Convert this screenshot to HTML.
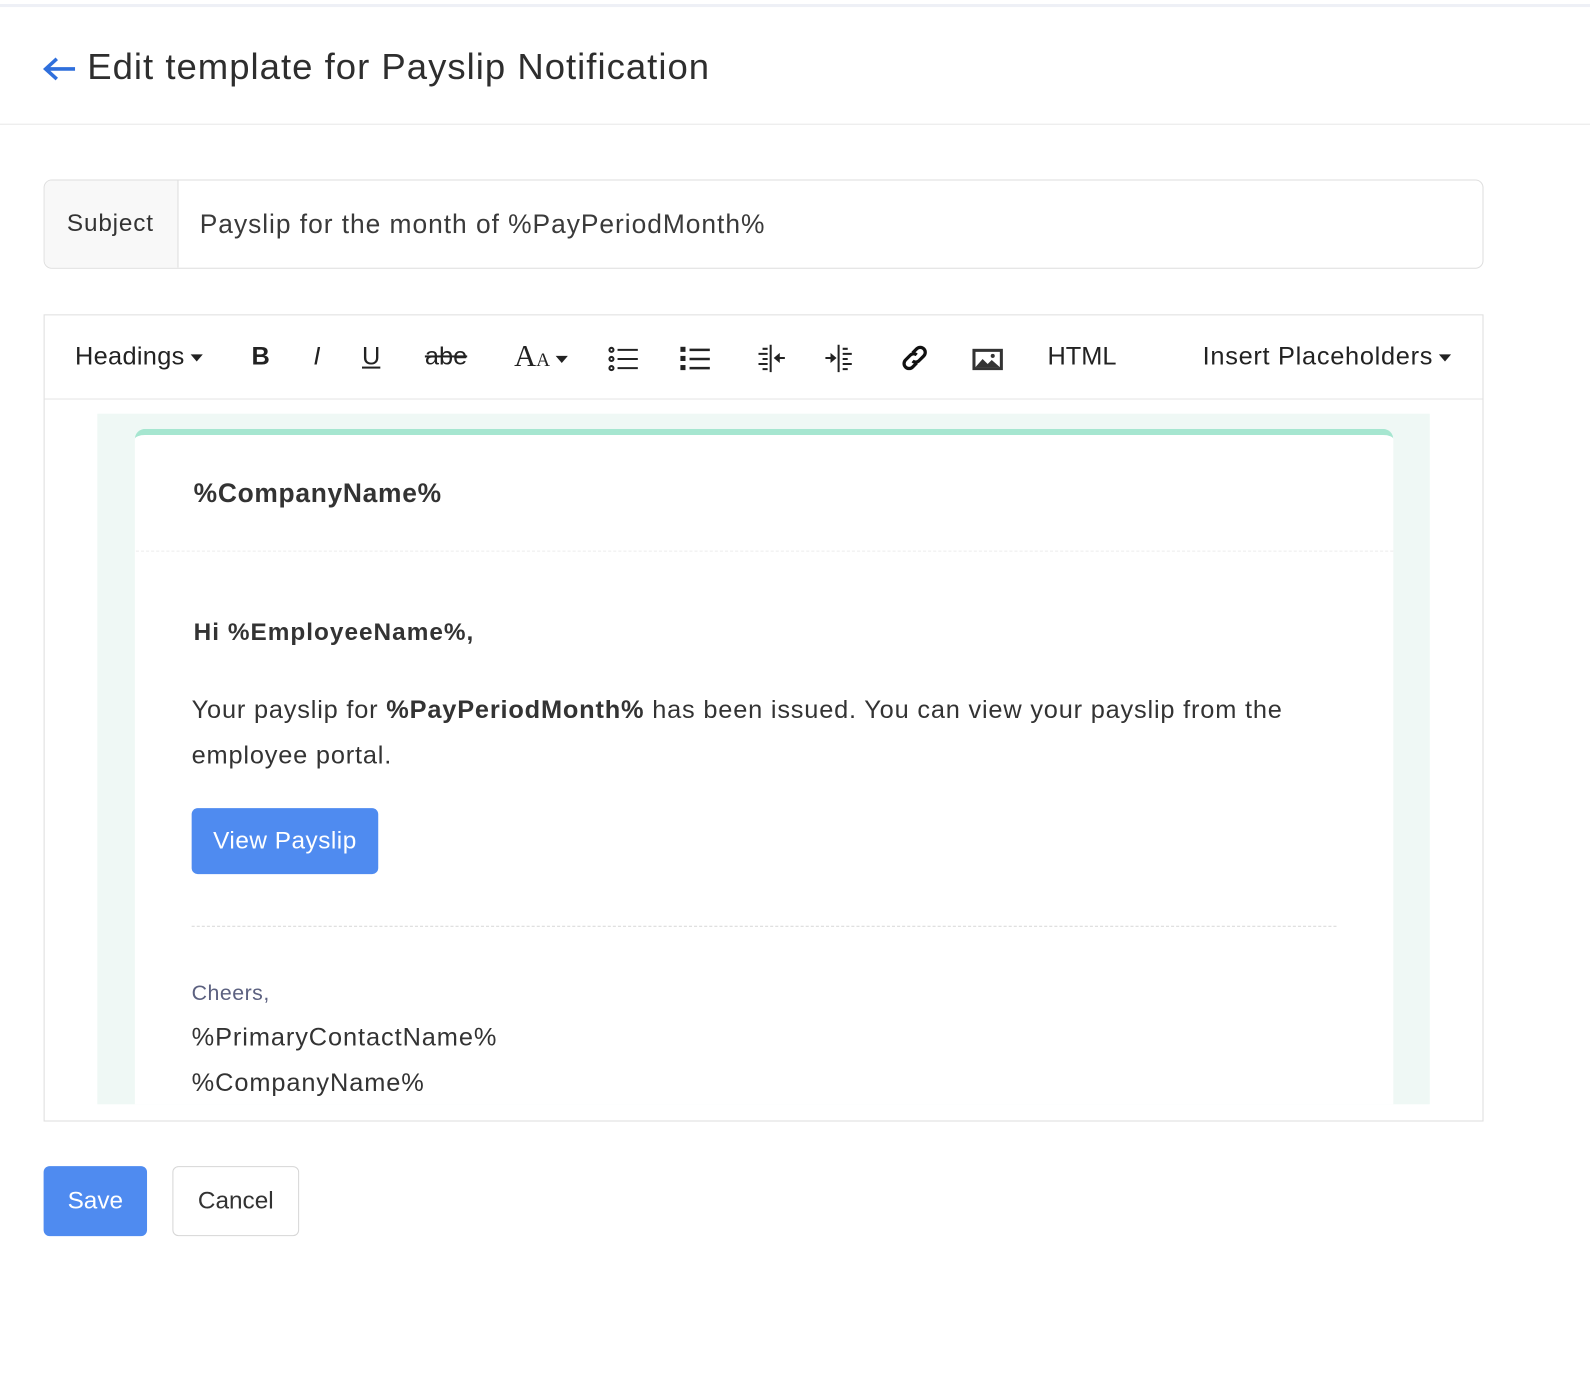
<!DOCTYPE html>
<html><head><meta charset="utf-8"><style>
html,body{margin:0;padding:0;background:#fff;width:1590px;height:1384px;overflow:hidden}
#w{position:absolute;left:0;top:0;width:1568px;height:1365px;transform:scale(1.01403);transform-origin:0 0;font-family:"Liberation Sans",sans-serif;color:#2b2b2b}
.a{position:absolute}
.tb{position:absolute;top:352px;transform:translateY(-50%);font-size:25px;color:#222;white-space:nowrap}
.car{display:inline-block;width:0;height:0;border-left:6px solid transparent;border-right:6px solid transparent;border-top:7px solid #222;vertical-align:middle;margin-left:6px}
</style></head><body><div id="w">
<div class="a" style="left:0;top:4px;width:1568px;height:3px;background:#eef0f6"></div>
<svg class="a" style="left:42px;top:55px" width="34" height="26" viewBox="0 0 34 26"><path d="M32 13H4M14 3L3 13l11 10" fill="none" stroke="#2f6fdc" stroke-width="3.5"/></svg>
<div class="a" style="left:86px;top:45px;font-size:36px;color:#2e2e2e;letter-spacing:1px">Edit template for Payslip Notification</div>
<div class="a" style="left:0;top:122px;width:1568px;height:1px;background:#e8e8e8"></div>

<div class="a" style="left:43px;top:177px;width:1418px;height:86px;border:1px solid #dedede;border-radius:8px;overflow:hidden">
 <div class="a" style="left:0;top:0;width:131px;height:86px;background:#f8f8f8;border-right:1px solid #dedede"></div>
 <div class="a" style="left:22px;top:29px;font-size:24px;color:#333;letter-spacing:0.8px">Subject</div>
 <div class="a" style="left:153px;top:28px;font-size:26px;color:#3a3a3a;letter-spacing:0.95px">Payslip for the month of %PayPeriodMonth%</div>
</div>

<div class="a" style="left:43px;top:310px;width:1418px;height:794px;border:1px solid #dedede"></div>
<div class="a" style="left:44px;top:393px;width:1418px;height:1px;background:#e4e4e4"></div>
<div class="tb" style="left:74px;letter-spacing:0.3px">Headings<span class="car"></span></div>
<div class="tb" style="left:248px;font-weight:bold">B</div>
<div class="tb" style="left:309px;font-style:italic">I</div>
<div class="tb" style="left:357px;text-decoration:underline">U</div>
<div class="tb" style="left:419px;text-decoration:line-through">abe</div>
<div class="tb" style="left:507px;font-family:'Liberation Serif',serif;font-size:30px">A<span style="font-size:19px">A</span><span class="car"></span></div>
<svg class="a" style="left:599px;top:340px" width="32" height="28" viewBox="0 0 32 28"><g fill="none" stroke="#222" stroke-width="2"><circle cx="4" cy="5" r="2"/><circle cx="4" cy="14" r="2"/><circle cx="4" cy="23" r="2"/><path d="M10 5h20M10 14h20M10 23h20"/></g></svg>
<svg class="a" style="left:670px;top:340px" width="32" height="28" viewBox="0 0 32 28"><g fill="#222"><rect x="1" y="2" width="5" height="5"/><rect x="1" y="11" width="5" height="5"/><rect x="1" y="20" width="5" height="5"/></g><path d="M10 5h20M10 14h20M10 23h20" stroke="#222" stroke-width="2.5"/></svg>
<svg class="a" style="left:744px;top:338px" width="32" height="30" viewBox="0 0 32 30"><path d="M16 2v27M8 6h5M4 11h9M8 16h5M4 21h9M8 26h5" stroke="#222" stroke-width="2"/><path d="M19 15l6-5v10z" fill="#222"/><path d="M24 15h6" stroke="#222" stroke-width="2"/></svg>
<svg class="a" style="left:813px;top:338px" width="32" height="30" viewBox="0 0 32 30"><path d="M14 2v27M18 6h5M18 11h9M18 16h5M18 21h9M18 26h5" stroke="#222" stroke-width="2"/><path d="M12 15l-6-5v10z" fill="#222"/><path d="M1 15h6" stroke="#222" stroke-width="2"/></svg>
<svg class="a" style="left:886px;top:338px" width="32" height="30" viewBox="0 0 32 30"><g fill="none" stroke="#111" stroke-width="3.2"><path d="M14 10l4-4a4.5 4.5 0 0 1 7 7l-5 5a4.5 4.5 0 0 1-6 0"/><path d="M18 20l-4 4a4.5 4.5 0 0 1-7-7l5-5a4.5 4.5 0 0 1 6 0"/></g></svg>
<svg class="a" style="left:958px;top:341px" width="32" height="26" viewBox="0 0 32 26"><rect x="1" y="3" width="30" height="21" fill="#333"/><rect x="4" y="6" width="24" height="15" fill="#fff"/><path d="M4 21l7-8 5 5 4-4 8 7z" fill="#333"/><circle cx="21" cy="10" r="2" fill="#333"/></svg>
<div class="tb" style="left:1033px">HTML</div>
<div class="tb" style="left:1186px;letter-spacing:0.7px">Insert Placeholders<span class="car"></span></div>

<div class="a" style="left:96px;top:408px;width:1314px;height:681px;background:#eff8f5"></div>
<div class="a" style="left:133px;top:423px;width:1241px;height:666px;background:#fff;border-top:6px solid #a6e6d0;border-radius:10px 10px 0 0;box-sizing:border-box"></div>
<div class="a" style="left:191px;top:471px;font-size:26px;font-weight:bold;color:#333;letter-spacing:0.7px">%CompanyName%</div>
<div class="a" style="left:134px;top:543px;width:1240px;border-top:1px dashed #ececec"></div>
<div class="a" style="left:191px;top:610px;font-size:24px;font-weight:bold;color:#333;letter-spacing:1px">Hi %EmployeeName%,</div>
<div class="a" style="left:189px;top:678px;width:1100px;font-size:25px;line-height:45px;color:#333;letter-spacing:0.8px">Your payslip for <b>%PayPeriodMonth%</b> has been issued. You can view your payslip from the employee portal.</div>
<div class="a" style="left:189px;top:797px;width:184px;height:65px;background:#4f8bf0;border-radius:6px;color:#fff;font-size:24px;line-height:65px;text-align:center;letter-spacing:0.5px">View Payslip</div>
<div class="a" style="left:189px;top:913px;width:1129px;border-top:1px dashed #dcdcdc"></div>
<div class="a" style="left:189px;top:968px;font-size:21px;color:#5c6180;letter-spacing:0.5px">Cheers,</div>
<div class="a" style="left:189px;top:1001px;font-size:25px;line-height:45px;color:#333;letter-spacing:0.9px">%PrimaryContactName%<br>%CompanyName%</div>

<div class="a" style="left:43px;top:1150px;width:102px;height:69px;background:#4f8bf0;border-radius:6px;color:#fff;font-size:24px;line-height:69px;text-align:center">Save</div>
<div class="a" style="left:170px;top:1150px;width:123px;height:67px;border:1px solid #d6d6d6;border-radius:6px;color:#333;font-size:24px;line-height:67px;text-align:center">Cancel</div>
</div></body></html>
